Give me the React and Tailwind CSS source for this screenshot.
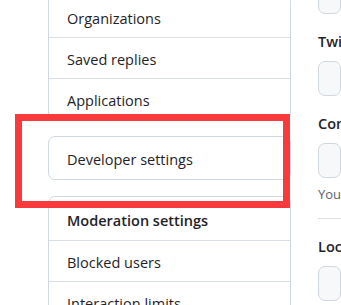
import React from 'react';

const font = { fontFamily: '"Open Sans", "Noto Sans", sans-serif' };

const MenuItem = ({ label, first }) => (
  <div
    className={`h-[41px] flex items-center pl-[18px] pt-[4px] text-[14.5px] text-[#1f2328] whitespace-nowrap ${
      first ? '' : 'border-t border-[#d8dee4]'
    }`}
  >
    {label}
  </div>
);

const Field = ({ label, note }) => (
  <div className="mt-[17px]">
    <div className="h-[22px] leading-[22px] text-[14.5px] font-semibold text-[#1f2328] whitespace-nowrap">
      {label}
    </div>
    <div className="mt-[8px] h-[35px] rounded-[7px] border border-[#d0d7de] bg-[#f6f8fa]" />
    {note && (
      <div className="mt-[6px] h-[20px] leading-[20px] text-[13px] text-[#59636e] whitespace-nowrap">
        {note}
      </div>
    )}
  </div>
);

export default function App() {
  return (
    <div className="relative w-[341px] h-[305px] overflow-hidden bg-white" style={font}>
      <div className="flex">
        {/* sidebar */}
        <div className="ml-[48px] w-[243px] shrink-0 mt-[-5px]">
          <div className="border border-[#d0d7de] rounded-[7px]">
            <MenuItem label="Organizations" first />
            <MenuItem label="Saved replies" />
            <MenuItem label="Applications" />
          </div>
          <div className="mt-[16px] border border-[#d0d7de] rounded-[7px]">
            <div className="h-[42px] flex items-center pl-[18px] pt-[4px] text-[14.5px] text-[#1f2328]">
              Developer settings
            </div>
          </div>
          <div className="mt-[16px] border border-[#d0d7de] rounded-[7px]">
            <div className="h-[43px] flex items-center pl-[18px] pt-[5px] text-[14.5px] font-semibold text-[#1f2328]">
              Moderation settings
            </div>
            <MenuItem label="Blocked users" />
            <MenuItem label="Interaction limits" />
          </div>
        </div>

        {/* form column */}
        <div className="ml-[27px] flex-1 min-w-0 mt-[-21px]">
          <div className="h-[35px] rounded-[7px] border border-[#d0d7de] bg-[#f6f8fa]" />
          <Field label="Twitter username" />
          <Field label="Company" note="You can @mention your company's GitHub organization" />
          <div className="mt-[14px] border-t border-[#d8dee4]" />
          <Field label="Location" />
        </div>
      </div>

      {/* highlight */}
      <div className="absolute left-[15px] top-[114px] w-[275px] h-[94px] border-[7px] border-[#f93a3c]" />
    </div>
  );
}
